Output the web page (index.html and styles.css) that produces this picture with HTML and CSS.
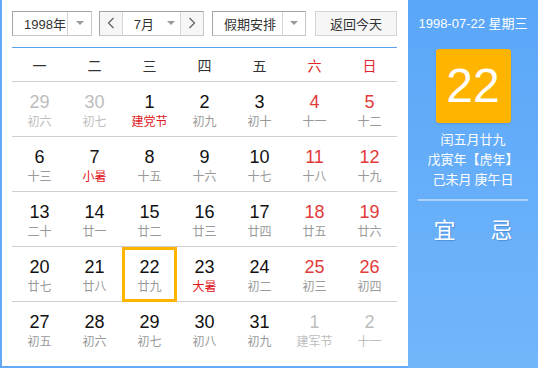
FILE: index.html
```html
<!DOCTYPE html>
<html lang="zh">
<head>
<meta charset="utf-8">
<link rel="stylesheet" href="styles.css">
</head>
<body>
<div class="cal">
  <div class="main">
    <div class="toolbar">
      <div class="sel year">
        <span class="sel-text">1998年</span>
        <span class="sel-arrow"><i class="tri"></i></span>
      </div>
      <div class="sel month">
        <span class="nav"><svg width="8" height="12" viewBox="0 0 8 12"><path d="M6.5 1 L1.5 6 L6.5 11" fill="none" stroke="#666" stroke-width="1.3"/></svg></span>
        <span class="month-mid"><span>7月</span><i class="tri"></i></span>
        <span class="nav"><svg width="8" height="12" viewBox="0 0 8 12"><path d="M1.5 1 L6.5 6 L1.5 11" fill="none" stroke="#666" stroke-width="1.3"/></svg></span>
      </div>
      <div class="sel holiday">
        <span class="sel-text">假期安排</span>
        <span class="sel-arrow"><i class="tri"></i></span>
      </div>
      <div class="today-btn">返回今天</div>
    </div>
    <div class="week">
      <span>一</span><span>二</span><span>三</span><span>四</span><span>五</span><span class="red">六</span><span class="red">日</span>
    </div>
    <div class="grid">
      <div class="cell other"><b>29</b><em>初六</em></div>
      <div class="cell other"><b>30</b><em>初七</em></div>
      <div class="cell"><b>1</b><em class="fest">建党节</em></div>
      <div class="cell"><b>2</b><em>初九</em></div>
      <div class="cell"><b>3</b><em>初十</em></div>
      <div class="cell wk"><b>4</b><em>十一</em></div>
      <div class="cell wk"><b>5</b><em>十二</em></div>

      <div class="cell"><b>6</b><em>十三</em></div>
      <div class="cell"><b>7</b><em class="fest">小暑</em></div>
      <div class="cell"><b>8</b><em>十五</em></div>
      <div class="cell"><b>9</b><em>十六</em></div>
      <div class="cell"><b>10</b><em>十七</em></div>
      <div class="cell wk"><b>11</b><em>十八</em></div>
      <div class="cell wk"><b>12</b><em>十九</em></div>

      <div class="cell"><b>13</b><em>二十</em></div>
      <div class="cell"><b>14</b><em>廿一</em></div>
      <div class="cell"><b>15</b><em>廿二</em></div>
      <div class="cell"><b>16</b><em>廿三</em></div>
      <div class="cell"><b>17</b><em>廿四</em></div>
      <div class="cell wk"><b>18</b><em>廿五</em></div>
      <div class="cell wk"><b>19</b><em>廿六</em></div>

      <div class="cell"><b>20</b><em>廿七</em></div>
      <div class="cell"><b>21</b><em>廿八</em></div>
      <div class="cell selected"><b>22</b><em>廿九</em></div>
      <div class="cell"><b>23</b><em class="fest">大暑</em></div>
      <div class="cell"><b>24</b><em>初二</em></div>
      <div class="cell wk"><b>25</b><em>初三</em></div>
      <div class="cell wk"><b>26</b><em>初四</em></div>

      <div class="cell last"><b>27</b><em>初五</em></div>
      <div class="cell last"><b>28</b><em>初六</em></div>
      <div class="cell last"><b>29</b><em>初七</em></div>
      <div class="cell last"><b>30</b><em>初八</em></div>
      <div class="cell last"><b>31</b><em>初九</em></div>
      <div class="cell last other"><b>1</b><em>建军节</em></div>
      <div class="cell last other"><b>2</b><em>十一</em></div>
    </div>
  </div>
  <div class="side">
    <div class="side-date">1998-07-22 星期三</div>
    <div class="big-day">22</div>
    <div class="lunar-info">
      <div>闰五月廿九</div>
      <div>戊寅年【虎年】</div>
      <div>己未月 庚午日</div>
    </div>
    <div class="side-rule"></div>
    <div class="yiji"><span>宜</span><span>忌</span></div>
  </div>
</div>
</body>
</html>
```

FILE: styles.css
```css
* { box-sizing: border-box; margin: 0; padding: 0; }
html, body { width: 538px; height: 368px; overflow: hidden; background: #fff; }
body {
  font-family: "Liberation Sans", Arial, "Noto Sans CJK SC", sans-serif;
  color: #333;
}
.cal {
  display: flex;
  width: 538px;
  height: 368px;
}
.main {
  width: 408px;
  height: 368px;
  border-left: 2px solid #62a9f6;
  border-bottom: 2px solid #62a9f6;
  padding: 0 11px 0 10px;
  background: #fff;
}
.toolbar {
  display: flex;
  align-items: center;
  height: 48px;
  padding-bottom: 1px;
  border-bottom: 1px solid #5ba3ee;
}
.sel {
  display: flex;
  height: 25px;
  border: 1px solid #c9c9c9;
  border-top-color: #a5a5a5;
  border-left-color: #a5a5a5;
  font-size: 13px;
  color: #333;
  background: #fff;
}
.sel-text {
  display: flex;
  align-items: center;
  padding-left: 11px;
  border-right: 1px solid #d6d6d6;
}
.sel-arrow {
  display: flex;
  align-items: center;
  justify-content: center;
}
.tri {
  display: block;
  width: 0;
  height: 0;
  border-left: 4px solid transparent;
  border-right: 4px solid transparent;
  border-top: 4px solid #999;
}
.year { width: 80px; }
.year .sel-text { width: 55px; }
.year .sel-arrow { flex: 1; }
.month { width: 105px; margin-left: 7px; }
.nav {
  width: 22px;
  display: flex;
  align-items: center;
  justify-content: center;
  background: #f6f6f6;
}
.month-mid {
  width: 60px;
  display: flex;
  align-items: center;
  padding-left: 11px;
  border-left: 1px solid #d6d6d6;
  border-right: 1px solid #d6d6d6;
}
.month-mid span { width: 33px; }
.holiday { width: 94px; margin-left: 8px; }
.holiday .sel-text { width: 70px; }
.holiday .sel-arrow { flex: 1; }
.today-btn {
  margin-left: 9px;
  width: 82px;
  height: 25px;
  border: 1px solid #d4d4d4;
  background: #f6f6f6;
  display: flex;
  align-items: center;
  justify-content: center;
  font-size: 13px;
  color: #333;
}
.week {
  display: grid;
  grid-template-columns: repeat(7, 55px);
  height: 34px;
  border-bottom: 1px solid #cfcfcf;
  align-items: center;
  font-size: 14px;
  color: #333;
  font-family: "Noto Sans CJK SC", sans-serif;
}
.week span { text-align: center; padding-top: 1px; }
.red { color: #e0262c; }
.grid {
  display: grid;
  grid-template-columns: repeat(7, 55px);
  grid-auto-rows: 55px;
}
.cell {
  position: relative;
  border-bottom: 1px solid #cfcfcf;
  text-align: center;
  padding-top: 10px;
}
.cell.last { border-bottom: 0; }
.cell b {
  display: block;
  font-weight: normal;
  font-size: 18px;
  line-height: 21px;
  color: #111;
}
.cell em {
  display: block;
  font-style: normal;
  font-size: 12px;
  line-height: 16px;
  color: #999;
  font-family: "Noto Sans CJK SC", sans-serif;
}
.cell.wk b { color: #e23a3a; }
.cell em.fest { color: #e0161c; }
.cell.other b, .cell.other em { color: #bdbdbd; }
.cell.selected::after {
  content: "";
  position: absolute;
  left: 0;
  top: 0;
  right: 0;
  bottom: -1px;
  border: 3px solid #ffb400;
}
.side {
  width: 130px;
  height: 368px;
  background: linear-gradient(#5aa6f8, #72b6fb);
  color: #fff;
  display: flex;
  flex-direction: column;
  align-items: center;
}
.side-date {
  margin-top: 15px;
  font-size: 13px;
  line-height: 18px;
  white-space: nowrap;
}
.big-day {
  margin-top: 16px;
  width: 75px;
  height: 74px;
  background: #ffb400;
  border-radius: 3px;
  box-shadow: 0 1px 2px rgba(0,0,0,0.12);
  font-size: 48px;
  line-height: 74px;
  text-align: center;
  color: #fff;
}
.lunar-info {
  margin-top: 6px;
  font-size: 13px;
  line-height: 20px;
  text-align: center;
  font-family: "Noto Sans CJK SC", sans-serif;
}
.side-rule {
  margin-top: 10px;
  width: 110px;
  height: 2px;
  background: rgba(255,255,255,0.45);
}
.yiji {
  margin-top: 14px;
  display: flex;
  gap: 35px;
  font-size: 22px;
  line-height: 26px;
  font-family: "Noto Sans CJK SC", sans-serif;
  text-shadow: 1px 1px 1px rgba(40,80,160,0.35);
}
```
